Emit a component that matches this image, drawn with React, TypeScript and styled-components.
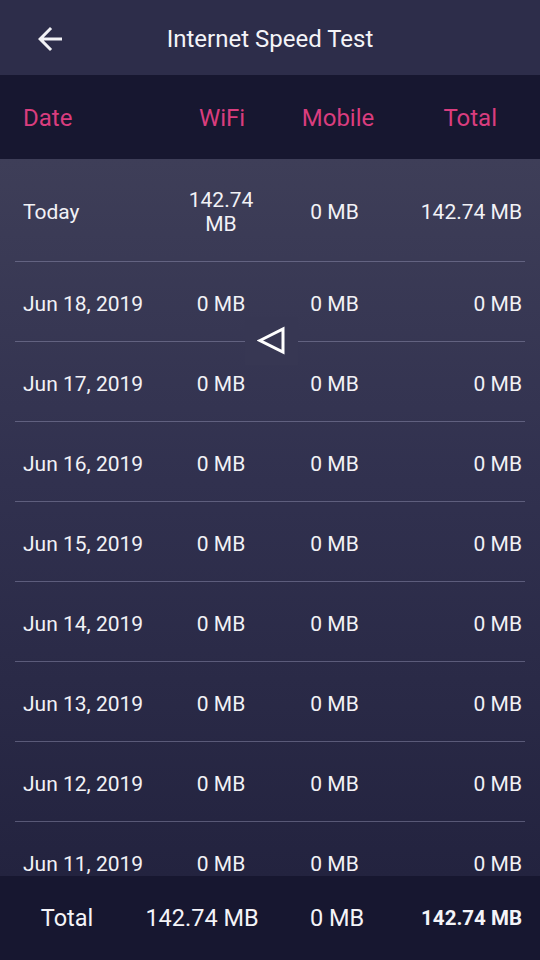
import React from "react";
import styled, { createGlobalStyle } from "styled-components";

const Global = createGlobalStyle`
  html, body { margin: 0; padding: 0; background: #171730; }
  body { font-family: Roboto, "Noto Sans", "Liberation Sans", sans-serif; }
  * { box-sizing: border-box; }
`;

const Screen = styled.div`
  width: 540px;
  height: 960px;
  display: flex;
  flex-direction: column;
  overflow: hidden;
  color: #f2f2f6;
`;

const TopBar = styled.div`
  height: 75px;
  flex: none;
  background: #2d2d4a;
  display: flex;
  align-items: center;
  position: relative;
`;

const BackButton = styled.div`
  width: 36px;
  height: 36px;
  margin-left: 32px;
  margin-top: 3px;
  display: flex;
  align-items: center;
  justify-content: center;
`;

const Title = styled.div`
  position: absolute;
  left: 0;
  right: 0;
  top: 2px;
  bottom: 0;
  display: flex;
  align-items: center;
  justify-content: center;
  font-size: 24px;
  color: #f4f4f8;
  pointer-events: none;
`;

const HeaderRow = styled.div`
  height: 84px;
  flex: none;
  background: #171730;
  display: grid;
  grid-template-columns: 137px 124px 108px 1fr;
  align-items: center;
  padding: 2px 43px 0 23px;
  font-size: 24px;
  color: #d93d7e;
`;

const HeadCell = styled.div<{ $align: string }>`
  text-align: ${(p) => p.$align};
`;

const Body = styled.div`
  flex: 1;
  position: relative;
  overflow: hidden;
  background: linear-gradient(180deg, #3e3e58 0%, #31314f 45%, #23233f 100%);
`;

const Row = styled.div<{ $h: number }>`
  height: ${(p) => p.$h}px;
  margin: 0 15px;
  padding: 4px 3px 0 8px;
  display: grid;
  grid-template-columns: 142px 112px 115px 1fr;
  align-items: center;
  border-bottom: 1px solid rgba(150, 150, 185, 0.45);
  font-size: 21px;
  line-height: 24px;
`;

const Cell = styled.div<{ $align: string }>`
  text-align: ${(p) => p.$align};
`;

const NavOverlay = styled.div`
  position: absolute;
  left: 245px;
  top: 158px;
  width: 53px;
  height: 48px;
  background: #373753;
  display: flex;
  align-items: center;
  justify-content: center;
`;

const Footer = styled.div`
  height: 84px;
  flex: none;
  background: #171730;
  display: grid;
  grid-template-columns: 88px 182px 88px 1fr;
  align-items: center;
  padding: 0 18px 0 23px;
  color: #f4f4f8;
`;

const FootCell = styled.div<{ $align: string; $bold?: boolean }>`
  text-align: ${(p) => p.$align};
  font-weight: ${(p) => (p.$bold ? 700 : 400)};
  font-size: ${(p) => (p.$bold ? "20.5px" : "23.5px")};
`;

const rows = [
  { d: "Today", w: "142.74 MB", m: "0 MB", t: "142.74 MB", h: 103 },
  { d: "Jun 18, 2019", w: "0 MB", m: "0 MB", t: "0 MB", h: 80 },
  { d: "Jun 17, 2019", w: "0 MB", m: "0 MB", t: "0 MB", h: 80 },
  { d: "Jun 16, 2019", w: "0 MB", m: "0 MB", t: "0 MB", h: 80 },
  { d: "Jun 15, 2019", w: "0 MB", m: "0 MB", t: "0 MB", h: 80 },
  { d: "Jun 14, 2019", w: "0 MB", m: "0 MB", t: "0 MB", h: 80 },
  { d: "Jun 13, 2019", w: "0 MB", m: "0 MB", t: "0 MB", h: 80 },
  { d: "Jun 12, 2019", w: "0 MB", m: "0 MB", t: "0 MB", h: 80 },
  { d: "Jun 11, 2019", w: "0 MB", m: "0 MB", t: "0 MB", h: 80 },
];

export default function App() {
  return (
    <>
      <Global />
      <Screen>
        <TopBar>
          <BackButton>
            <svg width="36" height="36" viewBox="0 0 24 24">
              <path
                d="M20 11H7.83l5.59-5.59L12 4l-8 8 8 8 1.41-1.41L7.83 13H20v-2z"
                fill="#f2f2f6"
              />
            </svg>
          </BackButton>
          <Title>Internet Speed Test</Title>
        </TopBar>
        <HeaderRow>
          <HeadCell $align="left">Date</HeadCell>
          <HeadCell $align="center">WiFi</HeadCell>
          <HeadCell $align="center">Mobile</HeadCell>
          <HeadCell $align="right">Total</HeadCell>
        </HeaderRow>
        <Body>
          {rows.map((r) => (
            <Row key={r.d} $h={r.h}>
              <Cell $align="left">{r.d}</Cell>
              <Cell $align="center">
                {r.d === "Today" ? (
                  <>
                    142.74
                    <br />
                    MB
                  </>
                ) : (
                  r.w
                )}
              </Cell>
              <Cell $align="center">{r.m}</Cell>
              <Cell $align="right">{r.t}</Cell>
            </Row>
          ))}
          <NavOverlay>
            <svg width="30" height="30" viewBox="0 0 30 30">
              <path
                d="M3 14.5 L26 3 L26 26 Z"
                fill="none"
                stroke="#ffffff"
                strokeWidth="3"
                strokeLinejoin="miter"
              />
            </svg>
          </NavOverlay>
        </Body>
        <Footer>
          <FootCell $align="center">Total</FootCell>
          <FootCell $align="center">142.74 MB</FootCell>
          <FootCell $align="center">0 MB</FootCell>
          <FootCell $align="right" $bold>
            142.74 MB
          </FootCell>
        </Footer>
      </Screen>
    </>
  );
}
